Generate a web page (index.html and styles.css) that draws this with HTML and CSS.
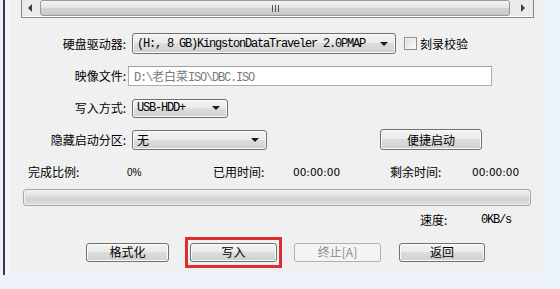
FILE: index.html
```html
<!DOCTYPE html>
<html lang="zh-CN">
<head>
  <meta charset="UTF-8" />
  <title>写入硬盘映像</title>
  <link rel="stylesheet" href="styles.css">
</head>
<body>
  <div class="window">
    <div class="list-tail">
      <div class="hscroll">
        <span class="sb-btn"><i class="tri tri-left"></i></span>
        <span class="sb-thumb"><span class="grip"></span></span>
        <span class="sb-btn"><i class="tri tri-right"></i></span>
      </div>
    </div>

    <div class="row row-drive">
      <span class="lbl">硬盘驱动器:</span>
      <div class="combo combo-drive"><span class="mono">(H:, 8 GB)KingstonDataTraveler 2.0PMAP</span><i class="arrow"></i></div>
      <label class="check"><span class="box"></span>刻录校验</label>
    </div>

    <div class="row row-image">
      <span class="lbl">映像文件:</span>
      <div class="field"><span class="mono">D:\<span class="cjk">老白菜</span>ISO\DBC.ISO</span></div>
    </div>

    <div class="row row-mode">
      <span class="lbl">写入方式:</span>
      <div class="combo combo-mode"><span class="mono">USB-HDD+</span><i class="arrow"></i></div>
    </div>

    <div class="row row-hide">
      <span class="lbl">隐藏启动分区:</span>
      <div class="combo combo-hide"><span class="cjk">无</span><i class="arrow"></i></div>
      <button class="btn btn-quick">便捷启动</button>
    </div>

    <div class="stats">
      <span class="st st-1">完成比例:</span>
      <span class="val val-pct">0%</span>
      <span class="st st-2">已用时间:</span>
      <span class="val val-time">00:00:00</span>
      <span class="st st-3">剩余时间:</span>
      <span class="val val-time">00:00:00</span>
    </div>

    <div class="progress"></div>

    <div class="speed">
      <span class="st">速度:</span>
      <span class="mono">0KB/s</span>
    </div>

    <div class="actions">
      <button class="btn btn-format">格式化</button>
      <div class="highlight"><button class="btn btn-write">写入</button></div>
      <button class="btn btn-stop" disabled>终止[A]</button>
      <button class="btn btn-back">返回</button>
    </div>
  </div>
</body>
</html>
```

FILE: styles.css
```css
* { box-sizing: border-box; margin: 0; padding: 0; }
body { background: #ebf2fa; font-family: "Noto Sans CJK SC", sans-serif; font-size: 12px; color: #000; }

.window { margin-left: 3px; width: 540px; height: 275px; border-left: 2px solid #3c3c3c; background: linear-gradient(to right, #f5f6f9 0, #f5f6f9 4px, #f0f0f0 4px); overflow: hidden; }

/* bottom of the list box above, only its scrollbar shows */
.list-tail { margin-left: 16px; width: 513px; height: 18px; border: 1px solid #828790; border-top: none; background: #fff; padding-bottom: 1px; }
.hscroll { display: flex; height: 16px; background: #eaeaea; }
.sb-btn { width: 18px; display: flex; align-items: center; justify-content: center; }
.sb-btn:last-child { width: 23px; }
.tri { display: block; width: 0; height: 0; border-top: 4px solid transparent; border-bottom: 4px solid transparent; }
.tri-left { border-right: 4px solid #3d3d3d; margin-left: -2px; }
.tri-right { border-left: 4px solid #3d3d3d; margin-left: 2px; }
.sb-thumb { flex: 1; display: flex; align-items: center; justify-content: center; border: 1px solid #989898; border-radius: 3px; background: linear-gradient(#f4f4f4, #e4e4e4 50%, #d3d3d3 51%, #c9c9c9); }
.grip { width: 7px; height: 7px; background: repeating-linear-gradient(to right, #555 0, #555 1px, transparent 1px, transparent 3px); }

.row { display: flex; align-items: center; }
.lbl { width: 121px; flex-shrink: 0; text-align: right; line-height: 16px; white-space: nowrap; }
.row-drive { margin-top: 15px; height: 21px; }
.row-image { margin-top: 12px; height: 20px; }
.row-mode { margin-top: 12px; height: 20px; }
.row-hide { margin-top: 11px; height: 21px; }

.mono { font-family: "Liberation Mono", monospace; font-size: 12px; letter-spacing: -1.2px; white-space: nowrap; }
.cjk { font-family: "Noto Sans CJK SC", sans-serif; font-size: 12px; letter-spacing: 0; }

.combo { position: relative; display: flex; align-items: center; flex-shrink: 0; margin-left: 6px; padding-left: 4px; border: 1px solid #707070; border-radius: 3px; background: linear-gradient(#f2f2f2, #ebebeb 49%, #dddddd 50%, #cfcfcf); box-shadow: inset 0 0 0 1px #fbfbfb; }
.combo-drive { width: 264px; height: 21px; }
.combo-mode { width: 96px; height: 19px; }
.combo-hide { width: 135px; height: 20px; }
.arrow { position: absolute; right: 7px; top: 50%; margin-top: -2px; width: 0; height: 0; border-left: 4px solid transparent; border-right: 4px solid transparent; border-top: 4px solid #1a1a1a; }

.check { display: flex; align-items: center; margin-left: 8px; gap: 3px; }
.box { width: 13px; height: 13px; border: 1px solid #8f8f8f; background: linear-gradient(135deg, #dcdcdc, #fbfbfb); box-shadow: inset 0 0 0 1px #f4f4f4; }

.field { display: flex; align-items: center; flex-shrink: 0; margin-left: 2px; width: 364px; height: 20px; padding-left: 5px; border: 1px solid #abadb3; border-top-color: #9fa1a6; background: #fff; color: #7a7a7a; }

.btn { flex-shrink: 0; font-family: "Noto Sans CJK SC", sans-serif; font-size: 12px; color: #000; height: 19px; line-height: 16px; border: 1px solid #707070; border-radius: 3px; background: linear-gradient(#f2f2f2, #ebebeb 49%, #dddddd 50%, #cfcfcf); box-shadow: inset 0 0 0 1px #fbfbfb; }
.btn-quick { margin-left: 113px; width: 102px; height: 21px; }

.stats { display: flex; align-items: center; height: 16px; margin-top: 14px; padding-left: 23px; }
.stats > span { flex-shrink: 0; }
.st { line-height: 16px; white-space: nowrap; }
.st-1 { width: 99px; }
.st-2 { width: 80px; }
.st-3 { width: 82px; }
.val-pct { width: 86px; font-family: "Liberation Sans", sans-serif; font-size: 10px; }
.val-time { width: 97px; font-family: "DejaVu Sans", sans-serif; font-size: 10.5px; }

.progress { margin: 9px 0 0 18px; width: 508px; height: 17px; border: 1px solid #a8a8a8; border-radius: 3px; background: linear-gradient(#f3f3f3, #e2e2e2 35%, #d2d2d2 60%, #dedede); box-shadow: inset 0 0 0 1px #eeeeee; }

.speed { display: flex; align-items: center; height: 16px; margin: 6px 0 0 415px; }
.speed .st { width: 61px; }

.actions { display: flex; align-items: center; height: 30px; margin-top: 9px; padding-left: 81px; }
.btn-format { width: 83px; }
.highlight { flex-shrink: 0; margin-left: 16px; padding: 3px 2px; border: 3px solid #dc2f33; }
.btn-write { display: block; width: 87px; }
.btn-stop { margin-left: 12px; width: 87px; color: #8d8d8d; border-color: #adb2b5; background: #f4f4f4; box-shadow: none; }
.btn-back { margin-left: 18px; width: 86px; }
```
